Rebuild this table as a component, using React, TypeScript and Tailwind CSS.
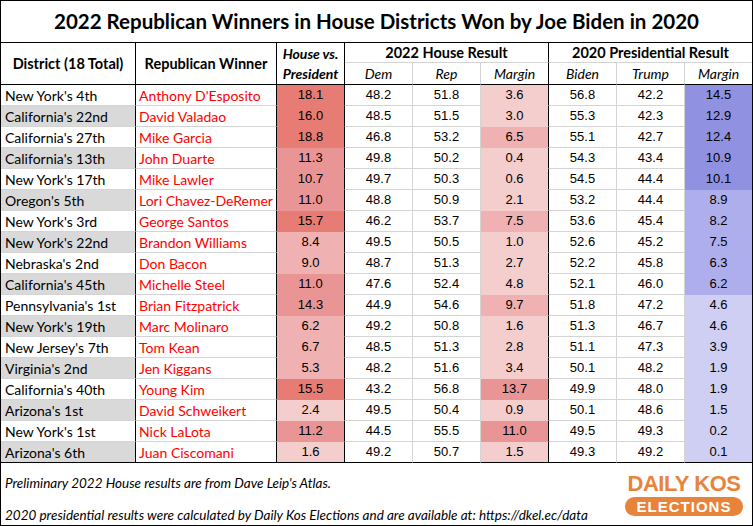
import React from 'react';

type Row = [string, string, number, number, number, number, number, number, number];

const rows: Row[] = [
  ["New York's 4th", "Anthony D'Esposito", 18.1, 48.2, 51.8, 3.6, 56.8, 42.2, 14.5],
  ["California's 22nd", 'David Valadao', 16.0, 48.5, 51.5, 3.0, 55.3, 42.3, 12.9],
  ["California's 27th", 'Mike Garcia', 18.8, 46.8, 53.2, 6.5, 55.1, 42.7, 12.4],
  ["California's 13th", 'John Duarte', 11.3, 49.8, 50.2, 0.4, 54.3, 43.4, 10.9],
  ["New York's 17th", 'Mike Lawler', 10.7, 49.7, 50.3, 0.6, 54.5, 44.4, 10.1],
  ["Oregon's 5th", 'Lori Chavez-DeRemer', 11.0, 48.8, 50.9, 2.1, 53.2, 44.4, 8.9],
  ["New York's 3rd", 'George Santos', 15.7, 46.2, 53.7, 7.5, 53.6, 45.4, 8.2],
  ["New York's 22nd", 'Brandon Williams', 8.4, 49.5, 50.5, 1.0, 52.6, 45.2, 7.5],
  ["Nebraska's 2nd", 'Don Bacon', 9.0, 48.7, 51.3, 2.7, 52.2, 45.8, 6.3],
  ["California's 45th", 'Michelle Steel', 11.0, 47.6, 52.4, 4.8, 52.1, 46.0, 6.2],
  ["Pennsylvania's 1st", 'Brian Fitzpatrick', 14.3, 44.9, 54.6, 9.7, 51.8, 47.2, 4.6],
  ["New York's 19th", 'Marc Molinaro', 6.2, 49.2, 50.8, 1.6, 51.3, 46.7, 4.6],
  ["New Jersey's 7th", 'Tom Kean', 6.7, 48.5, 51.3, 2.8, 51.1, 47.3, 3.9],
  ["Virginia's 2nd", 'Jen Kiggans', 5.3, 48.2, 51.6, 3.4, 50.1, 48.2, 1.9],
  ["California's 40th", 'Young Kim', 15.5, 43.2, 56.8, 13.7, 49.9, 48.0, 1.9],
  ["Arizona's 1st", 'David Schweikert', 2.4, 49.5, 50.4, 0.9, 50.1, 48.6, 1.5],
  ["New York's 1st", 'Nick LaLota', 11.2, 44.5, 55.5, 11.0, 49.5, 49.3, 0.2],
  ["Arizona's 6th", 'Juan Ciscomani', 1.6, 49.2, 50.7, 1.5, 49.3, 49.2, 0.1],
];

// color buckets, bg + matching bottom border so the grid line disappears
const red = (v: number) =>
  v >= 15
    ? 'bg-[#e67c73] border-b-[#e67c73]'
    : v >= 10
    ? 'bg-[#ea9595] border-b-[#ea9595]'
    : v >= 5
    ? 'bg-[#efb1b1] border-b-[#efb1b1]'
    : 'bg-[#f4cdcd] border-b-[#f4cdcd]';

const blue = (v: number) =>
  v >= 10
    ? 'bg-[#9191e1] border-b-[#9191e1]'
    : v >= 5
    ? 'bg-[#afaeec] border-b-[#afaeec]'
    : 'bg-[#cfcef3] border-b-[#cfcef3]';

const text = "font-['Lato','Open_Sans',sans-serif]";
const num = "font-['Liberation_Sans',Arial,sans-serif] text-[13px] text-black flex items-center justify-center";

export default function App() {
  return (
    <div className="w-[753px] h-[526px] border border-black bg-white flex flex-col text-black">
      <div className={`h-[42px] shrink-0 border-b border-black flex items-center justify-center ${text}`}>
        <h1 className="text-[20.5px] font-bold">
          2022 Republican Winners in House Districts Won by Joe Biden in 2020
        </h1>
      </div>

      <div className="grid grid-cols-[135px_141px_68px_68px_68px_68px_68px_68px_67px] grid-rows-[20px_22px_repeat(18,21px)]">
        <div className={`row-span-2 border-r border-b border-black flex items-center justify-center text-[14.5px] font-bold ${text}`}>
          District (18 Total)
        </div>
        <div className={`row-span-2 border-r border-b border-black flex items-center justify-center text-[14.5px] font-bold ${text}`}>
          Republican Winner
        </div>
        <div className={`row-span-2 border-r border-b border-black flex flex-col items-center justify-center text-[14px] font-bold italic leading-[20px] ${text}`}>
          <span>House vs.</span>
          <span>President</span>
        </div>
        <div className={`col-span-3 border-r border-b border-r-black border-b-[#d4d4d4] flex items-center justify-center text-[14.5px] font-bold ${text}`}>
          2022 House Result
        </div>
        <div className={`col-span-3 border-b border-[#d4d4d4] flex items-center justify-center text-[14.5px] font-bold ${text}`}>
          2020 Presidential Result
        </div>

        {['Dem', 'Rep', 'Margin', 'Biden', 'Trump', 'Margin'].map((h, i) => (
          <div
            key={i}
            className={`border-b border-black flex items-center justify-center text-[14px] italic ${text} ${
              i === 5 ? '' : i === 2 ? 'border-r border-r-black' : 'border-r border-r-[#d4d4d4]'
            }`}
          >
            {h}
          </div>
        ))}

        {rows.map((r, idx) => {
          const last = idx === rows.length - 1;
          const line = last ? 'border-b border-b-black' : 'border-b border-b-[#d4d4d4]';
          const colored = last ? 'border-b !border-b-black' : 'border-b';
          return (
            <React.Fragment key={r[0]}>
              <div
                className={`${line} border-r border-r-black flex items-center pl-[4px] text-[14px] ${text} ${
                  idx % 2 === 1 ? 'bg-[#d9d9d9]' : ''
                }`}
              >
                {r[0]}
              </div>
              <div className={`${line} border-r border-r-black flex items-center pl-[3px] text-[14px] text-[#ff0000] ${text}`}>
                {r[1]}
              </div>
              <div className={`${colored} ${red(r[2])} border-r border-r-black ${num}`}>{r[2].toFixed(1)}</div>
              <div className={`${line} border-r border-r-[#d4d4d4] ${num}`}>{r[3].toFixed(1)}</div>
              <div className={`${line} border-r border-r-[#d4d4d4] ${num}`}>{r[4].toFixed(1)}</div>
              <div className={`${colored} ${red(r[5])} border-r border-r-black ${num}`}>{r[5].toFixed(1)}</div>
              <div className={`${line} border-r border-r-[#d4d4d4] ${num}`}>{r[6].toFixed(1)}</div>
              <div className={`${line} border-r border-r-[#d4d4d4] ${num}`}>{r[7].toFixed(1)}</div>
              <div className={`${colored} ${blue(r[8])} ${num}`}>{r[8].toFixed(1)}</div>
            </React.Fragment>
          );
        })}
      </div>

      <div className="flex-1 flex justify-between">
        <div className={`flex flex-col pl-[4px] pt-[11px] gap-[14px] text-[13.5px] italic leading-[18px] ${text}`}>
          <p>Preliminary 2022 House results are from Dave Leip's Atlas.</p>
          <p>2020 presidential results were calculated by Daily Kos Elections and are available at: https://dkel.ec/data</p>
        </div>
        <div className="flex flex-col items-center pt-[11px] pr-[9px] font-['Liberation_Sans',Arial,sans-serif] font-bold text-[#e8833a]">
          <div className="text-[22px] leading-[20px] tracking-[-0.5px]">DAILY KOS</div>
          <div className="mt-[3px] w-[118px] h-[19px] rounded-full bg-[#e8833a] text-white text-[15px] leading-[19px] tracking-[1px] text-center">
            ELECTIONS
          </div>
        </div>
      </div>
    </div>
  );
}
